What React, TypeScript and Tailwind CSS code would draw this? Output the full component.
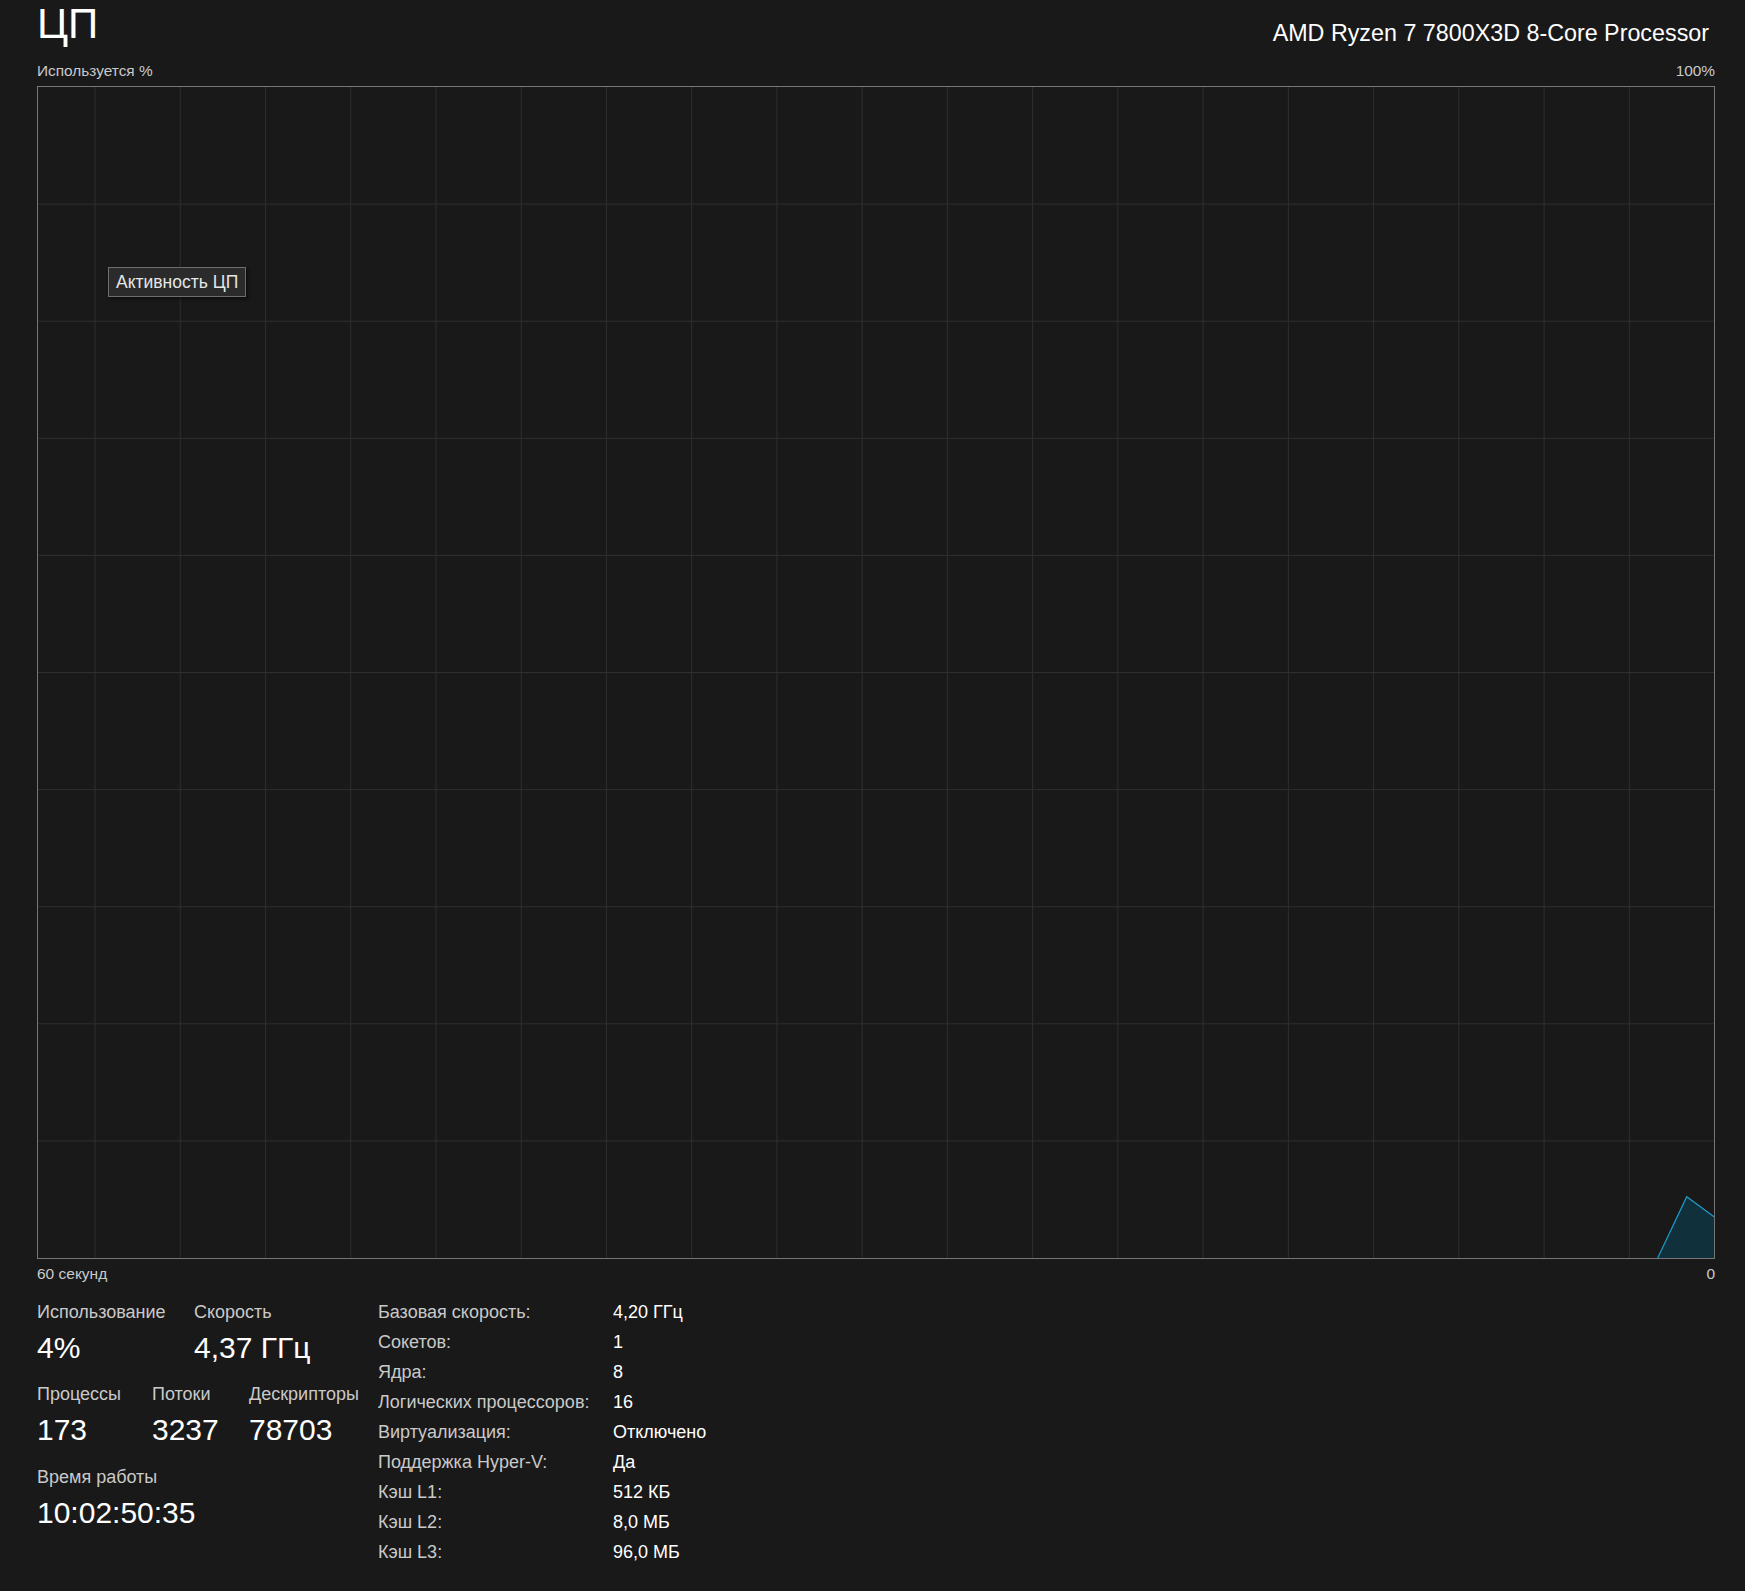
import React from "react";

const vLines = Array.from({ length: 19 }, (_, i) => 57 + i * 85.24);
const hLines = Array.from({ length: 9 }, (_, i) => (i + 1) * 117.1);

const specs: [string, string][] = [
  ["Базовая скорость:", "4,20 ГГц"],
  ["Сокетов:", "1"],
  ["Ядра:", "8"],
  ["Логических процессоров:", "16"],
  ["Виртуализация:", "Отключено"],
  ["Поддержка Hyper-V:", "Да"],
  ["Кэш L1:", "512 КБ"],
  ["Кэш L2:", "8,0 МБ"],
  ["Кэш L3:", "96,0 МБ"],
];

function Stat({ label, value, w }: { label: string; value: string; w?: string }) {
  return (
    <div className={w}>
      <div className="h-[18px] text-[18px] leading-[18px] text-[#c9c9c9] whitespace-nowrap">{label}</div>
      <div className="mt-[11px] h-[31px] text-[30px] leading-[31px] text-white whitespace-nowrap">{value}</div>
    </div>
  );
}

export default function App() {
  return (
    <div
      className="min-h-[1591px] w-full bg-[#191919] pl-[37px] text-white"
      style={{ fontFamily: '"Liberation Sans", Arial, sans-serif' }}
    >
      <div className="w-[1678px]">
        <div className="flex h-[63px] items-start justify-between">
          <div className="mt-[3px] text-[42px] leading-[42px] text-white">ЦП</div>
          <div className="mr-[6px] mt-[21px] text-[23.3px] leading-[24px] text-white">
            AMD Ryzen 7 7800X3D 8-Core Processor
          </div>
        </div>
        <div className="flex h-[23px] justify-between text-[15.4px] leading-[15px] text-[#c9c9c9]">
          <span>Используется %</span>
          <span>100%</span>
        </div>

        <div className="relative h-[1173px] w-[1678px] border border-[#767676]">
          <svg className="absolute inset-0 h-full w-full" viewBox="0 0 1676 1171" preserveAspectRatio="none">
            {vLines.map((x) => (
              <line key={"v" + x} x1={x} y1={0} x2={x} y2={1171} stroke="#2f2f2f" strokeWidth={1} />
            ))}
            {hLines.map((y) => (
              <line key={"h" + y} x1={0} y1={y} x2={1676} y2={y} stroke="#2f2f2f" strokeWidth={1} />
            ))}
            <polygon points="1619.7,1171 1648.7,1109.7 1676,1129.7 1676,1171" fill="#10303b" />
            <polyline
              points="1619.7,1171 1648.7,1109.7 1676,1129.7"
              fill="none"
              stroke="#1f9ccc"
              strokeWidth={1.2}
            />
          </svg>
          <div className="absolute left-[70px] top-[180px] flex h-[30px] items-center border border-[#6e6e6e] bg-[#2b2b2b] px-[7px] text-[17.5px] leading-[17px] text-[#e6e6e6] shadow-[2px_2px_3px_rgba(0,0,0,0.5)]">
            Активность ЦП
          </div>
        </div>

        <div className="mt-[7px] flex h-[15px] justify-between text-[15.5px] leading-[15px] text-[#c9c9c9]">
          <span>60 секунд</span>
          <span>0</span>
        </div>

        <div className="mt-[16px] flex">
          <div className="w-[341px] pt-[6px]">
            <div className="flex">
              <Stat label="Использование" value="4%" w="w-[157px]" />
              <Stat label="Скорость" value="4,37 ГГц" />
            </div>
            <div className="mt-[22px] flex">
              <Stat label="Процессы" value="173" w="w-[115px]" />
              <Stat label="Потоки" value="3237" w="w-[97px]" />
              <Stat label="Дескрипторы" value="78703" />
            </div>
            <div className="mt-[23px]">
              <Stat label="Время работы" value="10:02:50:35" />
            </div>
          </div>
          <div className="grid grid-cols-[235px_auto] text-[18px] leading-[30px]">
            {specs.map(([k, v]) => (
              <React.Fragment key={k}>
                <div className="text-[#c9c9c9] whitespace-nowrap">{k}</div>
                <div className="text-white whitespace-nowrap">{v}</div>
              </React.Fragment>
            ))}
          </div>
        </div>
      </div>
    </div>
  );
}
